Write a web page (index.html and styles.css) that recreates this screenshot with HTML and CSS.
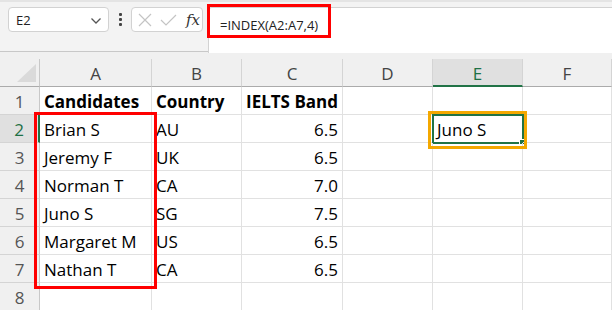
FILE: index.html
```html
<!DOCTYPE html>
<html>
<head>
<meta charset="utf-8">
<link rel="stylesheet" href="styles.css">
</head>
<body>
<div class="app">
  <div class="toolbar">
    <div class="namebox">
      <span class="nb-text">E2</span>
      <svg class="chev" width="12" height="8" viewBox="0 0 12 8"><path d="M1.5 1.5 L6 6 L10.5 1.5" fill="none" stroke="#555" stroke-width="1.3"/></svg>
    </div>
    <div class="dots"><span></span><span></span><span></span></div>
    <div class="fxbox">
      <svg width="14" height="14" viewBox="0 0 14 14"><path d="M1 1 L13 13 M13 1 L1 13" stroke="#c4c4c4" stroke-width="1.2" fill="none"/></svg>
      <svg width="17" height="14" viewBox="0 0 17 14"><path d="M1 7 L6 12 L16 2" stroke="#c4c4c4" stroke-width="1.2" fill="none"/></svg>
      <span class="fx">fx</span>
    </div>
    <div class="formula"><span class="ftext">=INDEX(A2:A7,4)</span></div>
  </div>
  <div class="sheet">
    <div class="grid">
      <div class="corner"><span class="tri"></span></div>
      <div class="ch">A</div><div class="ch">B</div><div class="ch">C</div><div class="ch">D</div><div class="ch sel">E</div><div class="ch">F</div>

      <div class="rh">1</div><div class="c b">Candidates</div><div class="c b">Country</div><div class="c b">IELTS Band</div><div class="c"></div><div class="c"></div><div class="c"></div>
      <div class="rh sel">2</div><div class="c">Brian S</div><div class="c">AU</div><div class="c r">6.5</div><div class="c"></div><div class="c active">Juno S<span class="handle"></span></div><div class="c"></div>
      <div class="rh">3</div><div class="c">Jeremy F</div><div class="c">UK</div><div class="c r">6.5</div><div class="c"></div><div class="c"></div><div class="c"></div>
      <div class="rh">4</div><div class="c">Norman T</div><div class="c">CA</div><div class="c r">7.0</div><div class="c"></div><div class="c"></div><div class="c"></div>
      <div class="rh">5</div><div class="c">Juno S</div><div class="c">SG</div><div class="c r">7.5</div><div class="c"></div><div class="c"></div><div class="c"></div>
      <div class="rh">6</div><div class="c">Margaret M</div><div class="c">US</div><div class="c r">6.5</div><div class="c"></div><div class="c"></div><div class="c"></div>
      <div class="rh">7</div><div class="c">Nathan T</div><div class="c">CA</div><div class="c r">6.5</div><div class="c"></div><div class="c"></div><div class="c"></div>
      <div class="rh">8</div><div class="c"></div><div class="c"></div><div class="c"></div><div class="c"></div><div class="c"></div><div class="c"></div>
    </div>
  </div>
  <div class="mark mark-formula"></div>
  <div class="mark mark-range"></div>
  <div class="mark mark-result"></div>
</div>
</body>
</html>
```
FILE: styles.css
```css
* { box-sizing: border-box; }
html, body { margin: 0; padding: 0; }
body { width: 612px; height: 310px; overflow: hidden; background: #fff; font-family: "Open Sans", "Noto Sans", sans-serif; }
.app { position: relative; width: 612px; height: 310px; overflow: hidden; background: #f0f0f0; }

.toolbar { height: 52px; background: #f3f3f3; border-top: 2px solid #e4e4e4; border-bottom: 1px solid #c8c8c8; display: flex; align-items: flex-start; padding: 5px 0 0 8px; }
.namebox { width: 101px; height: 25px; background: #fff; border: 1px solid #d2d2d2; border-radius: 4px; display: flex; align-items: center; justify-content: space-between; padding: 1px 6px 0 7px; }
.nb-text { font-size: 13px; color: #222; }
.chev { margin-top: 1px; }
.dots { width: 22px; height: 25px; display: flex; flex-direction: column; align-items: center; justify-content: center; gap: 2px; }
.dots span { width: 3px; height: 3px; background: #444; border-radius: 1px; }
.fxbox { width: 72px; height: 25px; background: #fff; border: 1px solid #d2d2d2; border-radius: 4px; display: flex; align-items: center; gap: 8px; padding-left: 6px; }
.fx { font-family: "DejaVu Serif", "Liberation Serif", serif; font-style: italic; font-size: 15px; color: #333; margin-left: 1px; }
.formula { flex: 1; margin-left: 5px; height: 46px; background: #fff; border: 1px solid #d2d2d2; border-right: none; border-bottom: none; border-radius: 4px 0 0 0; padding: 5px 0 0 11px; }
.ftext { font-size: 13px; color: #222; }

.sheet { padding-top: 7px; background: #f0f0f0; }
.grid { display: grid; grid-template-columns: 40px 112px 90px 101px 90px 90px 89px; grid-auto-rows: 28px; background: #fff; }
.corner { background: #f0f0f0; border-right: 1px solid #c8c8c8; border-bottom: 1px solid #ababab; position: relative; }
.tri { position: absolute; right: 3px; bottom: 4px; width: 0; height: 0; border-left: 19px solid transparent; border-bottom: 18px solid #dadada; }
.ch { background: #f0f0f0; border-right: 1px solid #d4d4d4; border-bottom: 1px solid #ababab; display: flex; align-items: center; justify-content: center; padding-top: 2px; font-size: 17px; color: #444; }
.ch.sel { background: #e0e0e0; color: #1e7145; border-bottom: 2px solid #217346; }
.rh { background: #f0f0f0; border-right: 1px solid #c8c8c8; border-bottom: 1px solid #d4d4d4; display: flex; align-items: center; justify-content: center; padding-top: 1px; font-size: 17px; color: #555; }
.rh.sel { background: #e0e0e0; color: #1e7145; border-right: 2px solid #217346; }
.c { border-right: 1px solid #e1e1e1; border-bottom: 1px solid #e1e1e1; display: flex; align-items: center; padding: 1px 4px 0; font-size: 17px; color: #000; white-space: nowrap; position: relative; }
.c.b { font-weight: 700; }
.c.r { justify-content: flex-end; }
.c.active { outline: 2px solid #217346; outline-offset: -1px; }
.handle { position: absolute; right: -3px; bottom: -3px; width: 6px; height: 6px; background: #217346; border: 1px solid #fff; }

.mark { position: absolute; border: 3px solid #ff0000; pointer-events: none; }
.mark-formula { left: 207px; top: 4px; width: 124px; height: 34px; }
.mark-range { left: 34px; top: 112px; width: 123px; height: 177px; }
.mark-result { left: 428px; top: 111px; width: 99px; height: 38px; border-color: #f4a800; }
```
